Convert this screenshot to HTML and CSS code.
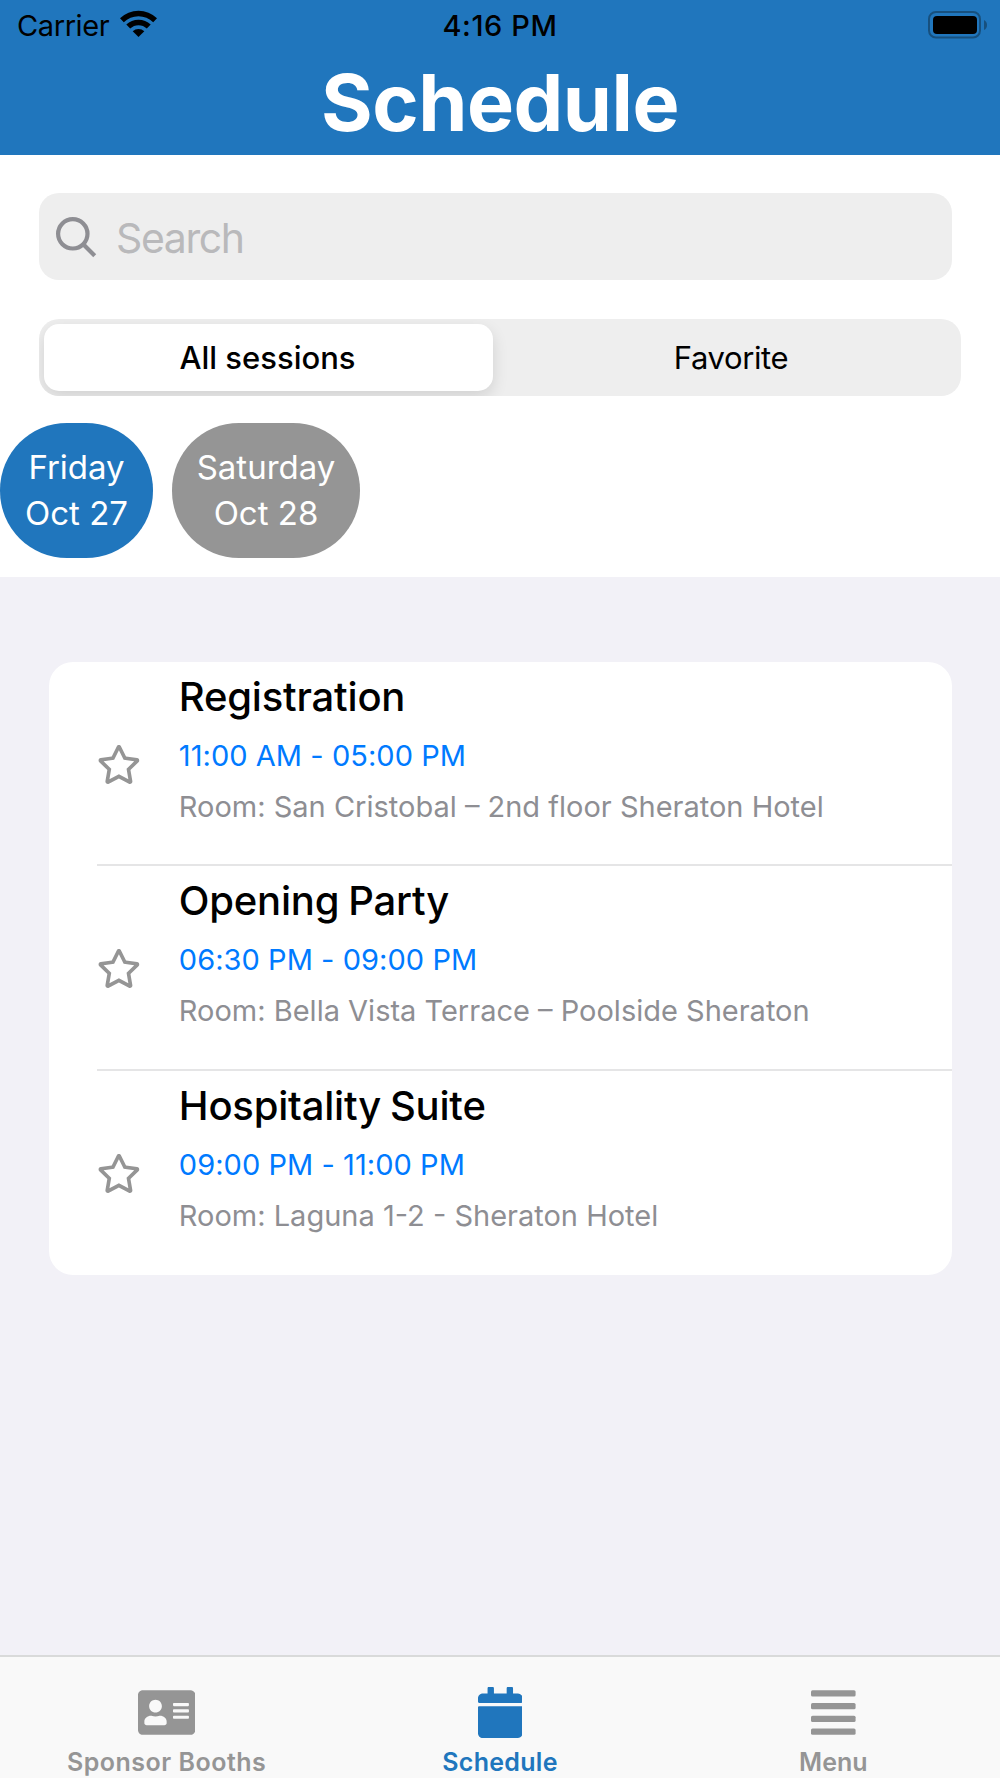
FILE: index.html
```html
<!DOCTYPE html>
<html lang="en">
<head>
    <meta charset="UTF-8">
    <meta name="viewport" content="width=device-width, initial-scale=1.0">
    <title>Schedule</title>
    <link rel="stylesheet" href="styles.css">
</head>
<body>

    <header>
        <div class="status-bar">
            <div class="carrier">
                <span>Carrier</span>
                <svg class="wifi" viewBox="0 0 37 27">
                    <path d="M0 8.2A26.5 26.5 0 0 1 37 8.2L33.2 12.2A21 21 0 0 0 3.8 12.2Z"/>
                    <path d="M6.3 14.6A17.6 17.6 0 0 1 30.7 14.6L26.8 18.5A12 12 0 0 0 10.2 18.5Z"/>
                    <path d="M12.7 21.2A8.4 8.4 0 0 1 24.3 21.2L18.5 27Z"/>
                </svg>
            </div>
            <div class="clock">4:16 PM</div>
            <svg class="battery" viewBox="0 0 60 28">
                <rect x="1" y="1" width="51" height="25.5" rx="7" fill="none" stroke="#17507e" stroke-width="2"/>
                <rect x="5" y="5" width="44" height="18" rx="4"/>
                <path d="M56 9Q59 10.5 59 14T56 19Z" fill="#17507e"/>
            </svg>
        </div>
        <h1>Schedule</h1>
    </header>

    <div class="filters">
        <div class="search">
            <svg viewBox="0 0 41 41">
                <circle cx="16.8" cy="16.8" r="14.7"/>
                <path d="M27.5 27.5L38.7 38.7"/>
            </svg>
            <span>Search</span>
        </div>

        <div class="segments">
            <div class="segment selected">All sessions</div>
            <div class="segment">Favorite</div>
        </div>

        <div class="days">
            <div class="day active">Friday<br>Oct 27</div>
            <div class="day saturday">Saturday<br>Oct 28</div>
        </div>
    </div>

    <main>
        <div class="sessions">
            <div class="session">
                <svg class="star" viewBox="0 0 576 512"><use href="#star"/></svg>
                <div class="details">
                    <h2>Registration</h2>
                    <div class="time">11:00 AM - 05:00 PM</div>
                    <div class="room">Room: San Cristobal – 2nd floor Sheraton Hotel</div>
                </div>
            </div>
            <div class="session">
                <svg class="star" viewBox="0 0 576 512"><use href="#star"/></svg>
                <div class="details">
                    <h2>Opening Party</h2>
                    <div class="time">06:30 PM - 09:00 PM</div>
                    <div class="room">Room: Bella Vista Terrace – Poolside Sheraton</div>
                </div>
            </div>
            <div class="session">
                <svg class="star" viewBox="0 0 576 512"><use href="#star"/></svg>
                <div class="details">
                    <h2>Hospitality Suite</h2>
                    <div class="time">09:00 PM - 11:00 PM</div>
                    <div class="room">Room: Laguna 1-2 - Sheraton Hotel</div>
                </div>
            </div>
        </div>
    </main>

    <nav>
        <div class="tab">
            <svg width="57.3" height="51" viewBox="0 0 576 512"><path d="M528 32H48C21.5 32 0 53.5 0 80v352c0 26.5 21.5 48 48 48h480c26.5 0 48-21.5 48-48V80c0-26.5-21.5-48-48-48zm-352 96c35.3 0 64 28.7 64 64s-28.7 64-64 64-64-28.7-64-64 28.7-64 64-64zm112 236.8c0 10.6-10 19.2-22.4 19.2H86.4C74 384 64 375.4 64 364.8v-19.2c0-31.8 30.1-57.6 67.2-57.6h5c12.3 5.1 25.7 8 39.8 8s27.6-2.9 39.8-8h5c37.1 0 67.2 25.8 67.2 57.6v19.2zM512 312c0 4.4-3.6 8-8 8H360c-4.4 0-8-3.6-8-8v-16c0-4.4 3.6-8 8-8h144c4.4 0 8 3.6 8 8v16zm0-64c0 4.4-3.6 8-8 8H360c-4.4 0-8-3.6-8-8v-16c0-4.4 3.6-8 8-8h144c4.4 0 8 3.6 8 8v16zm0-64c0 4.4-3.6 8-8 8H360c-4.4 0-8-3.6-8-8v-16c0-4.4 3.6-8 8-8h144c4.4 0 8 3.6 8 8v16z"/></svg>
            <span>Sponsor Booths</span>
        </div>
        <div class="tab current">
            <svg width="44.6" height="51" viewBox="0 0 448 512"><path d="M12 192h424c6.6 0 12 5.4 12 12v260c0 26.5-21.5 48-48 48H48c-26.5 0-48-21.5-48-48V204c0-6.6 5.4-12 12-12zm436-44v-36c0-26.5-21.5-48-48-48h-48V12c0-6.6-5.4-12-12-12h-40c-6.6 0-12 5.4-12 12v52H160V12c0-6.6-5.4-12-12-12h-40c-6.6 0-12 5.4-12 12v52H48C21.5 64 0 85.5 0 112v36c0 6.6 5.4 12 12 12h424c6.6 0 12-5.4 12-12z"/></svg>
            <span>Schedule</span>
        </div>
        <div class="tab menu">
            <svg width="44.6" height="51" viewBox="0 0 448 512">
                <rect y="32" width="448" height="64" rx="16"/>
                <rect y="160" width="448" height="64" rx="16"/>
                <rect y="288" width="448" height="64" rx="16"/>
                <rect y="416" width="448" height="64" rx="16"/>
            </svg>
            <span>Menu</span>
        </div>
    </nav>

    <!-- shared star outline -->
    <svg class="defs">
        <symbol id="star" viewBox="0 0 576 512"><path d="M528.1 171.5L382 150.2 316.7 17.8c-11.7-23.6-45.6-23.9-57.4 0L194 150.2 47.9 171.5c-26.2 3.8-36.7 36.1-17.7 54.6l105.7 103-25 145.5c-4.5 26.3 23.2 46 46.4 33.7L288 439.6l130.7 68.7c23.2 12.2 50.9-7.4 46.4-33.7l-25-145.5 105.7-103c19-18.5 8.5-50.8-17.7-54.6zM388.6 312.3l23.7 138.4L288 385.4l-124.3 65.3 23.7-138.4-100.6-98 139-20.2 62.2-126 62.2 126 139 20.2-100.6 98z"/></symbol>
    </svg>

</body>
</html>
```
FILE: styles.css
```css
* {
    box-sizing: border-box;
}
body {
    font-family: Inter, "Liberation Sans", sans-serif;
    background-color: #f2f1f7;
    color: #000;
    margin: 0;
    height: 1778px;
    display: flex;
    flex-direction: column;
    white-space: nowrap;
}
svg {
    display: block;
    flex: none;
}
header {
    background-color: #2076bd;
    height: 155px;
}
.status-bar {
    display: grid;
    grid-template-columns: 1fr auto 1fr;
    align-items: center;
    height: 50px;
    padding: 0 12px;
    font-size: 29px;
}
.carrier {
    display: flex;
    align-items: center;
    gap: 11px;
    margin-left: 5px;
    letter-spacing: -0.4px;
}
.wifi {
    width: 37px;
    height: 27px;
    margin-bottom: 3px;
}
.clock {
    font-weight: 500;
    letter-spacing: 0.6px;
}
.battery {
    width: 60px;
    height: 28px;
    justify-self: end;
}
h1 {
    margin: 0;
    color: #fff;
    font-size: 79px;
    font-weight: 700;
    letter-spacing: -0.5px;
    line-height: 104px;
    text-align: center;
}
.filters {
    background-color: #fff;
    height: 422px;
    padding-top: 38px;
}
.search {
    display: flex;
    align-items: center;
    gap: 19px;
    height: 87px;
    margin: 0 48px 0 39px;
    padding: 2px 0 0 17px;
    border-radius: 20px;
    background-color: #eee;
    color: #b9b9bb;
    font-size: 41px;
    letter-spacing: -1.4px;
}
.search svg {
    width: 41px;
    height: 41px;
    fill: none;
    stroke: #8e8e93;
    stroke-width: 4.2;
}
.segments {
    display: flex;
    height: 77px;
    margin: 39px 39px 0;
    padding: 5px;
    border-radius: 20px;
    background-color: #eee;
    overflow: hidden;
}
.segment {
    flex: 1;
    padding-left: 13px;
    font-size: 31px;
    letter-spacing: -0.4px;
    line-height: 67px;
    text-align: center;
}
.segment.selected {
    flex: none;
    width: 449px;
    padding: 0 2px 0 0;
    border-radius: 15px;
    background-color: #fff;
    box-shadow: 0 6px 16px rgba(0, 0, 0, 0.12);
    font-weight: 500;
    letter-spacing: 0;
}
.days {
    display: flex;
    gap: 19px;
    margin-top: 27px;
}
.day {
    width: 153px;
    height: 135px;
    padding-top: 21px;
    border-radius: 67px;
    background-color: #959595;
    color: #fff;
    font-size: 33px;
    line-height: 46px;
    text-align: center;
}
.day.active {
    background-color: #2076bd;
}
.day.saturday {
    width: 188px;
}
main {
    flex: 1;
    padding: 85px 48px 0 49px;
}
.sessions {
    border-radius: 24px;
    background-color: #fff;
}
.session {
    display: flex;
    height: 204.4px;
    margin-left: 48px;
    border-bottom: 2px solid #e5e5e6;
}
.session:last-child {
    border-bottom: none;
}
.star {
    width: 43.8px;
    height: 39px;
    margin-top: 83px;
    fill: #959595;
}
.details {
    margin-left: 38px;
    padding-top: 10px;
}
h2 {
    margin: 0;
    font-size: 40px;
    font-weight: 500;
    letter-spacing: -0.2px;
    word-spacing: -1.5px;
    line-height: 49px;
}
.time, .room {
    font-size: 29px;
    line-height: 52px;
}
.time {
    margin-top: 9px;
    color: #007aff;
    letter-spacing: 0.05px;
}
.room {
    margin-top: -1px;
    color: #8e8e93;
}
nav {
    display: flex;
    height: 123px;
    border-top: 2px solid #d9dada;
    background-color: #f9f9f9;
}
.tab {
    flex: 1;
    display: flex;
    flex-direction: column;
    align-items: center;
    padding-top: 30px;
    color: #959595;
    font-size: 25px;
    font-weight: 600;
    letter-spacing: 0.5px;
    line-height: 30px;
}
.tab svg {
    fill: currentColor;
    margin-bottom: 9px;
}
.tab.current {
    color: #2076bd;
    letter-spacing: 0.3px;
}
.tab.menu {
    letter-spacing: 0;
}
.defs {
    position: absolute;
    width: 0;
    height: 0;
}
```
